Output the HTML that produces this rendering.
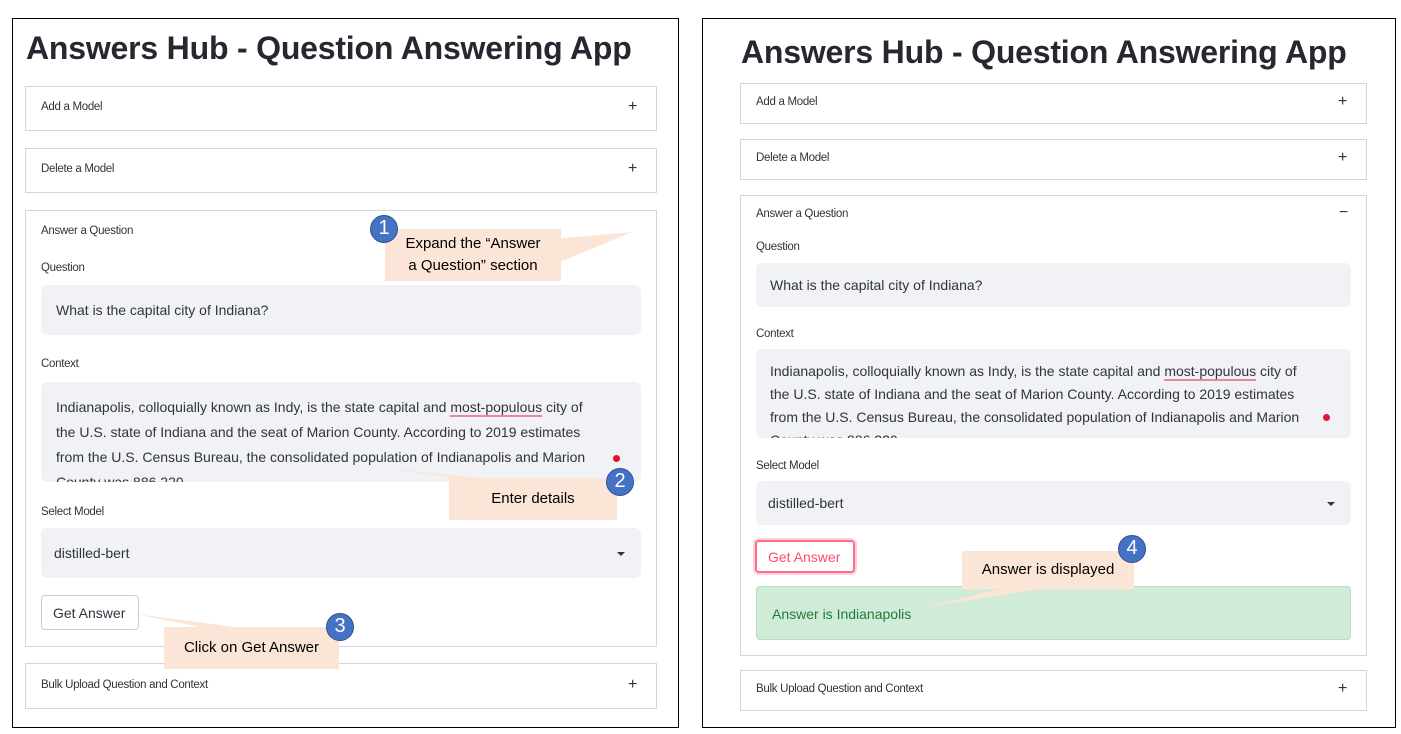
<!DOCTYPE html>
<html><head><meta charset="utf-8"><style>
*{margin:0;padding:0;box-sizing:border-box}
body{width:1401px;height:734px;background:#fff;position:relative;overflow:hidden;font-family:"Liberation Sans","DejaVu Sans",sans-serif;color:#262730}
.a{position:absolute}
.panel{position:absolute;border:1px solid #000}
.exp{position:absolute;border:1px solid #d6d6d8;background:#fff}
.sm{position:absolute;font-size:11.5px;color:#31333f;white-space:nowrap;letter-spacing:-0.3px}
.pl{position:absolute;font-size:16px;color:#31333f}
.in{position:absolute;background:#f0f2f6;border-radius:6px;font-size:14px;color:#31333f;overflow:hidden}
.h1{position:absolute;font-weight:bold;font-size:32px;color:#262730;white-space:nowrap;letter-spacing:-0.2px}
.ctx{line-height:25px;font-size:14px;white-space:nowrap}
.ul{border-bottom:2px solid #e8889a}
.dot{position:absolute;width:7px;height:7px;border-radius:50%;background:#e8102f}
.box{position:absolute;background:#fbe5d6;font-family:"Liberation Sans",sans-serif;font-size:15px;color:#000;text-align:center;white-space:nowrap}
.num{position:absolute;width:28px;height:28px;border-radius:50%;background:#4472c4;border:1.5px solid #2f528f;color:#fff;font-size:20px;text-align:center;line-height:25px}
.caret{position:absolute;width:0;height:0;border-left:4px solid transparent;border-right:4px solid transparent;border-top:4px solid #31333f}
</style></head><body>

<!-- LEFT PANEL -->
<div class="panel" style="left:12px;top:18px;width:667px;height:710px"></div>
<div class="h1" style="left:26px;top:30px">Answers Hub - Question Answering App</div>
<div class="exp" style="left:25px;top:86px;width:632px;height:45px"></div>
<div class="sm" style="left:41px;top:101px">Add a Model</div><div class="pl" style="left:628px;top:98px">+</div>
<div class="exp" style="left:25px;top:148px;width:632px;height:45px"></div>
<div class="sm" style="left:41px;top:163px">Delete a Model</div><div class="pl" style="left:628px;top:160px">+</div>
<div class="exp" style="left:25px;top:210px;width:632px;height:437px"></div>
<div class="sm" style="left:41px;top:225px">Answer a Question</div>
<div class="sm" style="left:41px;top:262px">Question</div>
<div class="in" style="left:41px;top:285px;width:600px;height:50px;padding:17px 0 0 15px">What is the capital city of Indiana?</div>
<div class="sm" style="left:41px;top:358px">Context</div>
<div class="in ctx" style="left:41px;top:382px;width:600px;height:100px;padding:13px 0 0 15px">Indianapolis, colloquially known as Indy, is the state capital and <span class="ul">most-populous</span> city of<br>the U.S. state of Indiana and the seat of Marion County. According to 2019 estimates<br>from the U.S. Census Bureau, the consolidated population of Indianapolis and Marion<br>County was 886,220</div>
<div class="dot" style="left:613px;top:455px"></div>
<div class="sm" style="left:41px;top:506px">Select Model</div>
<div class="in" style="left:41px;top:528px;width:600px;height:50px;padding:17px 0 0 13px">distilled-bert</div>
<div class="caret" style="left:617px;top:552px"></div>
<div class="a" style="left:41px;top:595px;width:98px;height:35px;border:1px solid #ccc;border-radius:4px;font-size:14px;color:#31333f;padding:9px 0 0 11px">Get Answer</div>
<div class="exp" style="left:25px;top:663px;width:632px;height:46px"></div>
<div class="sm" style="left:41px;top:679px">Bulk Upload Question and Context</div><div class="pl" style="left:628px;top:676px">+</div>

<!-- RIGHT PANEL -->
<div class="panel" style="left:702px;top:18px;width:694px;height:710px"></div>
<div class="h1" style="left:741px;top:34px">Answers Hub - Question Answering App</div>
<div class="exp" style="left:740px;top:83px;width:627px;height:41px"></div>
<div class="sm" style="left:756px;top:96px">Add a Model</div><div class="pl" style="left:1338px;top:93px">+</div>
<div class="exp" style="left:740px;top:139px;width:627px;height:41px"></div>
<div class="sm" style="left:756px;top:152px">Delete a Model</div><div class="pl" style="left:1338px;top:149px">+</div>
<div class="exp" style="left:740px;top:195px;width:627px;height:461px"></div>
<div class="sm" style="left:756px;top:208px">Answer a Question</div><div class="pl" style="left:1339px;top:204px">−</div>
<div class="sm" style="left:756px;top:241px">Question</div>
<div class="in" style="left:756px;top:263px;width:595px;height:44px;padding:14px 0 0 14px">What is the capital city of Indiana?</div>
<div class="sm" style="left:756px;top:328px">Context</div>
<div class="in ctx" style="left:756px;top:349px;width:595px;height:89px;padding:11px 0 0 14px;line-height:23px">Indianapolis, colloquially known as Indy, is the state capital and <span class="ul">most-populous</span> city of<br>the U.S. state of Indiana and the seat of Marion County. According to 2019 estimates<br>from the U.S. Census Bureau, the consolidated population of Indianapolis and Marion<br>County was 886,220</div>
<div class="dot" style="left:1323px;top:414px"></div>
<div class="sm" style="left:756px;top:460px">Select Model</div>
<div class="in" style="left:756px;top:481px;width:595px;height:44px;padding:14px 0 0 12px">distilled-bert</div>
<div class="caret" style="left:1327px;top:502px"></div>
<div class="a" style="left:755px;top:540px;width:100px;height:33px;border:2px solid #ff6b8a;box-shadow:0 0 0 2px #ffd0da;border-radius:4px;font-size:14px;color:#ff4b6b;padding:7px 0 0 11px">Get Answer</div>
<div class="a" style="left:756px;top:586px;width:595px;height:54px;background:#d0ecd8;border:1px solid #b3e0c0;border-radius:4px;font-size:14px;color:#1f7a3c;padding:19px 0 0 15px">Answer is Indianapolis</div>
<div class="exp" style="left:740px;top:670px;width:627px;height:41px"></div>
<div class="sm" style="left:756px;top:683px">Bulk Upload Question and Context</div><div class="pl" style="left:1338px;top:680px">+</div>

<!-- callouts -->
<svg class="a" style="left:0;top:0" width="1401" height="734">
<polygon points="540,240 632,232 560,262" fill="#fbe5d6"/>
<polygon points="455,478 480,478 380,468" fill="#fbe5d6"/>
<polygon points="200,627 235,627 135,614" fill="#fbe5d6"/>
<polygon points="1000,589 1040,589 925,607" fill="#fbe5d6"/>
</svg>
<div class="box" style="left:385px;top:229px;width:176px;height:52px;line-height:22px;padding-top:4px">Expand the “Answer<br>a Question” section</div>
<div class="num" style="left:370px;top:215px">1</div>
<div class="box" style="left:449px;top:478px;width:168px;height:42px;line-height:42px">Enter details</div>
<div class="num" style="left:606px;top:468px">2</div>
<div class="box" style="left:164px;top:627px;width:175px;height:42px;line-height:42px">Click on Get Answer</div>
<div class="num" style="left:326px;top:613px">3</div>
<div class="box" style="left:962px;top:551px;width:172px;height:38px;line-height:38px">Answer is displayed</div>
<div class="num" style="left:1118px;top:535px">4</div>
</body></html>
